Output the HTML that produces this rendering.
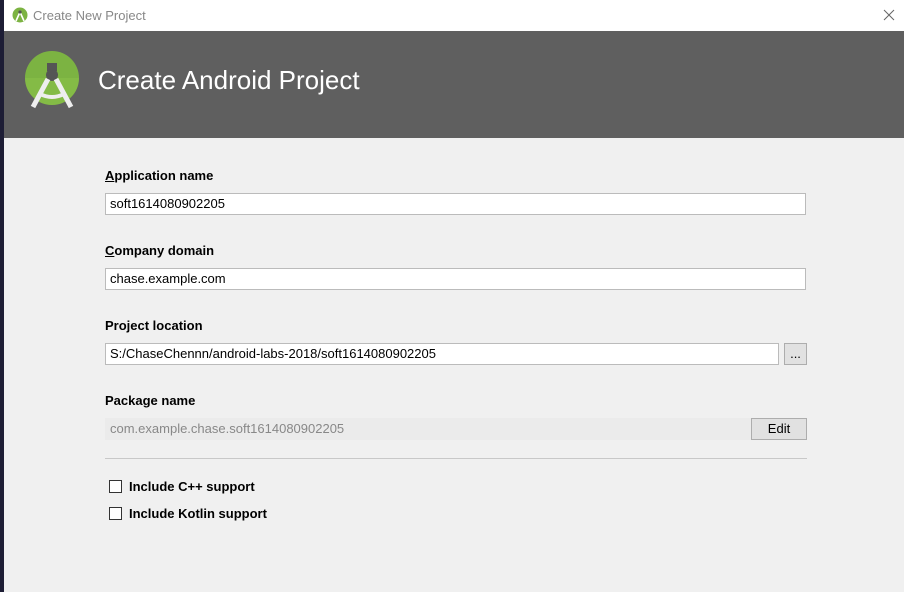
<!DOCTYPE html>
<html><head><style>
body{margin:0;width:904px;height:592px;overflow:hidden;background:#f0f0f0;font-family:"Liberation Sans",sans-serif;position:relative}
.a{position:absolute}
.lbl{position:absolute;left:105px;font-size:13px;font-weight:bold;color:#000}
.in{position:absolute;left:105px;height:20px;border:1px solid #bbb;background:#fff;font-size:13px;line-height:20px;padding-left:4px;box-sizing:content-box;color:#000}
.btn{position:absolute;background:#e1e1e1;border:1px solid #adadad;font-size:13px;text-align:center;line-height:20px;height:20px}
.cb{position:absolute;left:109px;width:11px;height:11px;border:1px solid #333;background:#fff}
.ct{position:absolute;left:129px;font-size:13px;font-weight:bold}
</style></head><body>
<div class="a" style="left:0;top:0;width:4px;height:592px;background:#1d1d35"></div>
<div class="a" style="left:4px;top:0;width:900px;height:31px;background:#fff"></div>
<svg class="a" style="left:12px;top:7px" width="16" height="16" viewBox="0 0 16 16"><circle cx="8" cy="8" r="7.5" fill="#7cb342"/><path d="M4 14L8 5L12 14" stroke="#fff" stroke-width="1.6" fill="none"/><circle cx="8" cy="5" r="1.6" fill="#555"/></svg>
<div class="a" style="left:33px;top:8px;font-size:13px;color:#888">Create New Project</div>
<svg class="a" style="left:883px;top:9px" width="12" height="12" viewBox="0 0 12 12"><path d="M1 1L11 11M11 1L1 11" stroke="#666" stroke-width="1"/></svg>
<div class="a" style="left:4px;top:31px;width:900px;height:107px;background:#5f5f5f"></div>
<svg class="a" style="left:24px;top:50px" width="56" height="62" viewBox="0 0 56 62"><circle cx="28" cy="28" r="27" fill="#7cb342"/><path d="M1 28A27 27 0 0 0 55 28Z" fill="#8bc34a" opacity=".5"/><rect x="23" y="13" width="10" height="8" fill="#555"/><circle cx="28" cy="25" r="6" fill="#555"/><path d="M24 29L9 57M32 29L47 57" stroke="#eee" stroke-width="5"/><path d="M16 44Q28 50 40 44" stroke="#eee" stroke-width="4" fill="none"/></svg>
<div class="a" style="left:98px;top:65px;font-size:26px;color:#fff">Create Android Project</div>
<div class="lbl" style="top:168px"><u>A</u>pplication name</div>
<div class="in" style="top:193px;width:695px">soft1614080902205</div>
<div class="lbl" style="top:243px"><u>C</u>ompany domain</div>
<div class="in" style="top:268px;width:695px">chase.example.com</div>
<div class="lbl" style="top:318px">Project location</div>
<div class="in" style="top:343px;width:668px">S:/ChaseChennn/android-labs-2018/soft1614080902205</div>
<div class="btn" style="left:784px;top:343px;width:21px">...</div>
<div class="lbl" style="top:393px">Package name</div>
<div class="in" style="top:418px;width:640px;background:#ebebeb;border-color:#ebebeb;color:#888">com.example.chase.soft1614080902205</div>
<div class="btn" style="left:751px;top:418px;width:54px">Edit</div>
<div class="a" style="left:105px;top:458px;width:702px;height:1px;background:#c8c8c8"></div>
<div class="cb" style="top:480px"></div><div class="ct" style="top:479px">Include C++ support</div>
<div class="cb" style="top:507px"></div><div class="ct" style="top:506px">Include Kotlin support</div>
</body></html>
